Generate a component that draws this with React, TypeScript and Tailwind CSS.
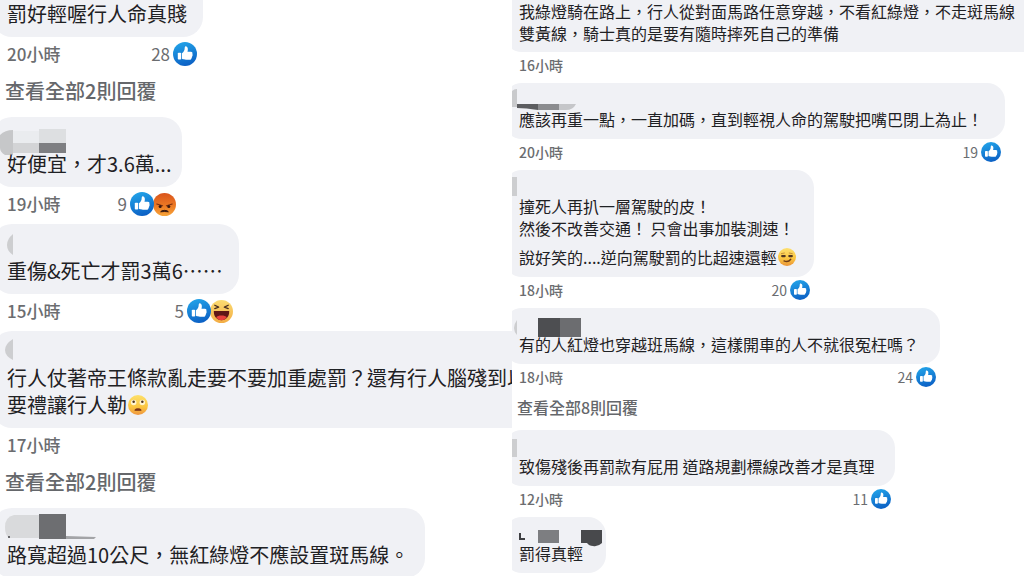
import React from "react";

type Reaction = "like" | "angry" | "haha";

interface Comment {
  lines: React.ReactNode[];
  time?: string;
  count?: number;
  reactions?: Reaction[];
  replies?: string;
  mark?: React.ReactNode;
  open?: boolean;
  bleed?: boolean;
  width?: string;
}

function Like({ className }: { className: string }) {
  return (
    <svg viewBox="0 0 24 24" className={className} aria-hidden="true">
      <defs>
        <linearGradient id="like" x1="0.3" y1="0" x2="0.6" y2="1">
          <stop offset="0" stopColor="#22a3e8" />
          <stop offset="1" stopColor="#0b5fc4" />
        </linearGradient>
      </defs>
      <circle cx="12" cy="12" r="12" fill="url(#like)" />
      <rect x="4.8" y="10.8" width="3.4" height="6.8" rx="0.8" fill="#fff" />
      <path
        d="M9 11.2c1.800-1 2.600-2.800 2.700-5.200 0-1.300.8-1.900 1.700-1.600 1.600.5 1.800 2.800 1.100 5.300h3.400c1.400 0 2 1.200 1.400 2.200.6.7.5 1.600-.2 2.100.3.8 0 1.500-.6 1.900.1 1.100-.7 1.800-1.900 1.800H13c-1.600 0-2.700-.3-4-.9z"
        fill="#fff"
      />
    </svg>
  );
}

function Angry({ className }: { className: string }) {
  return (
    <svg viewBox="0 0 24 24" className={className} aria-hidden="true">
      <defs>
        <linearGradient id="angry" x1="0" y1="0" x2="0" y2="1">
          <stop offset="0" stopColor="#d9541c" />
          <stop offset="0.6" stopColor="#ee7d25" />
          <stop offset="1" stopColor="#f7a53a" />
        </linearGradient>
      </defs>
      <circle cx="12" cy="12" r="12" fill="url(#angry)" />
      <path d="M4 11.500l6 1.800M20 11.500l-6 1.800" stroke="#7a2f12" strokeWidth="1.200" strokeLinecap="round" />
      <circle cx="7.500" cy="14" r="1.600" fill="#3c1a10" />
      <circle cx="16.500" cy="14" r="1.600" fill="#3c1a10" />
      <path d="M8 19.600c1-2 7-2 8 0-2.500-.4-5.500-.4-8 0z" fill="#3c1a10" stroke="#3c1a10" />
    </svg>
  );
}

function Haha({ className }: { className: string }) {
  return (
    <svg viewBox="0 0 24 24" className={className} aria-hidden="true">
      <defs>
        <linearGradient id="haha" x1="0" y1="0" x2="0" y2="1">
          <stop offset="0" stopColor="#fbdc72" />
          <stop offset="1" stopColor="#f3ad45" />
        </linearGradient>
      </defs>
      <circle cx="12" cy="12" r="12" fill="url(#haha)" />
      <path
        d="M5 5.500l4 2-4 1.500M19 5.500l-4 2 4 1.500"
        fill="none"
        stroke="#4a3020"
        strokeWidth="1.400"
        strokeLinecap="round"
        strokeLinejoin="round"
      />
      <path d="M4 11.500h16c.3 5.500-3 9.500-8 9.500s-8.300-4-8-9.500z" fill="#5f1717" />
      <path d="M6.500 18c1.500-2.500 9.500-2.500 11 0-1.400 2-3.300 3-5.500 3s-4.100-1-5.500-3z" fill="#e8413c" />
    </svg>
  );
}

function RollingEyes({ className }: { className: string }) {
  return (
    <svg viewBox="0 0 24 24" className={className} role="img" aria-label="🙄">
      <defs>
        <linearGradient id="roll" x1="0" y1="0" x2="0" y2="1">
          <stop offset="0" stopColor="#fde06a" />
          <stop offset="0.600" stopColor="#fbc53f" />
          <stop offset="1" stopColor="#ee9540" />
        </linearGradient>
      </defs>
      <circle cx="12" cy="12" r="12" fill="url(#roll)" />
      <circle cx="6.800" cy="9" r="3.300" fill="#fff4cf" />
      <circle cx="17.200" cy="9" r="3.300" fill="#fff4cf" />
      <circle cx="6.800" cy="8" r="1.500" fill="#503622" />
      <circle cx="17.200" cy="8" r="1.500" fill="#503622" />
      <path d="M8.500 18.200c1.500-2 5.500-2 7 0z" fill="#7a3417" stroke="#7a3417" strokeWidth="1.400" strokeLinejoin="round" />
    </svg>
  );
}

function Smirk({ className }: { className: string }) {
  return (
    <svg viewBox="0 0 24 24" className={className} role="img" aria-label="😏">
      <defs>
        <linearGradient id="smirk" x1="0" y1="0" x2="0" y2="1">
          <stop offset="0" stopColor="#fde070" />
          <stop offset="0.600" stopColor="#fac440" />
          <stop offset="1" stopColor="#ea9338" />
        </linearGradient>
      </defs>
      <circle cx="12" cy="12" r="12" fill="url(#smirk)" />
      <path d="M4.500 7.500l4-.8M15 6.700l4 .8" stroke="#c08a35" strokeWidth="1.200" strokeLinecap="round" />
      <path d="M5.500 10.800h3.500M15 10.800h3.500" stroke="#503622" strokeWidth="2.800" strokeLinecap="round" />
      <path d="M8 17.200c3.500 1.500 7 .6 9-2.200" fill="none" stroke="#6d3b18" strokeWidth="1.800" strokeLinecap="round" />
    </svg>
  );
}

const icons = { like: Like, angry: Angry, haha: Haha };

const leftComments: Comment[] = [
  { lines: ["罰好輕喔行人命真賤"], time: "20小時", count: 28, reactions: ["like"], replies: "查看全部2則回覆", open: true },
  {
    lines: ["好便宜，才3.6萬..."],
    time: "19小時",
    count: 9,
    reactions: ["like", "angry"],
    width: "w-[182px]",
    mark: (
      <>
        <path d="M0 18q5-5 13-5v25H5q-5-3-5-7z" fill="#c6c7c9" />
        <path d="M13 14h26v12H13z" fill="#eaecef" />
        <path d="M13 26h26v10H13z" fill="#d3d4d6" />
        <path d="M39 12h27v14H39z" fill="#dddfe1" />
        <path d="M39 26h27v10H39z" fill="#7e7f82" />
      </>
    ),
  },
  {
    lines: ["重傷&死亡才罰3萬6⋯⋯"],
    time: "15小時",
    count: 5,
    reactions: ["like", "haha"],
    mark: <path d="M13 10v21q-6-4-6-10t6-11z" fill="#cdced0" />,
  },
  {
    lines: [
      "行人仗著帝王條款亂走要不要加重處罰？還有行人腦殘到以",
      <>
        要禮讓行人勒
        <RollingEyes className="ml-px size-5" />
      </>,
    ],
    time: "17小時",
    replies: "查看全部2則回覆",
    bleed: true,
    mark: <path d="M13 8v21q-8-4-8-10t8-11z" fill="#cdced0" />,
  },
  {
    lines: ["路寬超過10公尺，無紅綠燈不應設置斑馬線。"],
    mark: (
      <>
        <path d="M39 7H14q-9 2-9 12 0 8 4 11h30z" fill="#d9dadc" />
        <path d="M39 6h27v25H39z" fill="#6d6e71" />
        <path d="M66 28l30 1-2 2H66z" fill="#a3a4a7" />
        <circle cx="9" cy="29" r="1" fill="#444548" />
      </>
    ),
  },
];

const rightComments: Comment[] = [
  {
    lines: ["我綠燈騎在路上，行人從對面馬路任意穿越，不看紅綠燈，不走斑馬線", "雙黃線，騎士真的是要有隨時摔死自己的準備"],
    time: "16小時",
    open: true,
    bleed: true,
  },
  {
    lines: ["應該再重一點，一直加碼，直到輕視人命的駕駛把嘴巴閉上為止！"],
    time: "20小時",
    count: 19,
    reactions: ["like"],
    width: "w-[493px]",
    mark: (
      <>
        <path d="M0 8q2-2 5-2v18H0z" fill="#c9cacc" />
        <path d="M5 21h21v6q-12-2-21-2z" fill="#5c5d60" />
        <path d="M26 21h21v6H26z" fill="#8b8c8f" />
        <path d="M47 21h17q-3 6-10 6h-7z" fill="#c5c6c9" />
      </>
    ),
  },
  {
    lines: [
      "撞死人再扒一層駕駛的皮！",
      "然後不改善交通！ 只會出事加裝測速！",
      <>
        說好笑的....逆向駕駛罰的比超速還輕
        <Smirk className="ml-px size-[18px]" />
      </>,
    ],
    time: "18小時",
    count: 20,
    reactions: ["like"],
    width: "w-[302px]",
    mark: <path d="M0 7h5v19H0z" fill="#cdced0" />,
  },
  {
    lines: ["有的人紅燈也穿越班馬線，這樣開車的人不就很冤枉嗎？"],
    time: "18小時",
    count: 24,
    reactions: ["like"],
    replies: "查看全部8則回覆",
    width: "w-[428px]",
    mark: (
      <>
        <path d="M5 12v15q-3-3-3-7t3-8z" fill="#cdced0" />
        <path d="M26 10h22v19H26z" fill="#4d4e51" />
        <path d="M48 10h21v19H48z" fill="#6c6d70" />
      </>
    ),
  },
  {
    lines: ["致傷殘後再罰款有屁用 道路規劃標線改善才是真理"],
    time: "12小時",
    count: 11,
    reactions: ["like"],
    width: "w-[383px]",
    mark: <path d="M0 9h5v18H0z" fill="#cdced0" />,
  },
  {
    lines: ["罰得真輕"],
    width: "w-[94px]",
    mark: (
      <>
        <path d="M8 16v6h5" fill="none" stroke="#3e3f42" strokeWidth="2" />
        <path d="M26 13h21v13H26z" fill="#7d7e81" />
        <path d="M69 13h21v13q-4 4-9 3-4 0-6-3h-6z" fill="#48494c" />
      </>
    ),
  },
];

function LargeComment({ c }: { c: Comment }) {
  return (
    <article className={c.bleed ? "w-full" : (c.width ?? "w-fit")}>
      <div
        className={`-ml-2 bg-[#f0f1f5] pb-[10px] pl-2 ${c.open ? "rounded-b-[20px]" : c.bleed ? "rounded-l-[20px]" : "rounded-[20px]"}`}
      >
        {!c.open && (
          <svg className="block h-[33px] w-24 overflow-visible" aria-hidden="true">
            {c.mark}
          </svg>
        )}
        <div className="pr-4 pl-[7px] text-[20px] leading-[27px] whitespace-nowrap text-[#1f2124]">
          {c.lines.map((line, i) => (
            <p key={i} className="flex items-center">
              {line}
            </p>
          ))}
        </div>
      </div>
      {c.time && (
        <div className="mb-[3px] flex h-[34px] items-center justify-between pr-[6px] pl-[7px] text-[17px] text-[#6b6d70]">
          <a href="#" className="font-medium">
            {c.time}
          </a>
          {c.reactions && (
            <button type="button" className="flex items-center">
              <span className="mr-[3px]">{c.count}</span>
              {c.reactions.map((r, i) => {
                const Icon = icons[r];
                return <Icon key={r} className={i ? "-ml-px size-[23px]" : "relative z-10 size-[24px]"} />;
              })}
            </button>
          )}
        </div>
      )}
      {c.replies && (
        <button type="button" className="mb-[9px] ml-[5px] block h-[34px] text-[20px] font-medium text-[#65676b]">
          {c.replies}
        </button>
      )}
    </article>
  );
}

function SmallComment({ c }: { c: Comment }) {
  return (
    <article className={c.width ?? "w-full"}>
      <div
        className={`-ml-2 bg-[#f0f1f5] pl-2 ${c.open ? "rounded-bl-[18px] pb-2" : "rounded-[18px] pb-[9px]"}`}
      >
        {!c.open && (
          <svg className="block h-[25px] w-24 overflow-visible" aria-hidden="true">
            {c.mark}
          </svg>
        )}
        <div className="pl-[7px] text-[16px] leading-[22px] whitespace-nowrap text-[#1f2124]">
          {c.lines.map((line, i) => (
            <p key={i} className={i === 2 ? "mt-[7px] flex items-center" : "flex items-center"}>
              {line}
            </p>
          ))}
        </div>
      </div>
      {c.time && (
        <div className="mb-[5px] flex h-[26px] items-center justify-between pr-1 pl-[7px] text-[14px] text-[#6b6d70]">
          <a href="#" className="font-medium">
            {c.time}
          </a>
          {c.reactions && (
            <button type="button" className="flex items-center">
              <span className="mr-[3px]">{c.count}</span>
              <Like className="size-5" />
            </button>
          )}
        </div>
      )}
      {c.replies && (
        <button type="button" className="mb-[11px] ml-[5px] block h-[24px] text-[16px] font-medium text-[#65676b]">
          {c.replies}
        </button>
      )}
    </article>
  );
}

export default function App() {
  return (
    <main
      lang="zh-Hant"
      className="grid h-screen grid-cols-2 overflow-hidden bg-white font-['Noto_Sans_CJK_TC',sans-serif]"
    >
      <section className="min-w-0 overflow-hidden" aria-label="留言">
        {leftComments.map((c, i) => (
          <LargeComment key={i} c={c} />
        ))}
      </section>
      <section className="min-w-0 overflow-hidden" aria-label="更多留言">
        {rightComments.map((c, i) => (
          <SmallComment key={i} c={c} />
        ))}
      </section>
    </main>
  );
}
